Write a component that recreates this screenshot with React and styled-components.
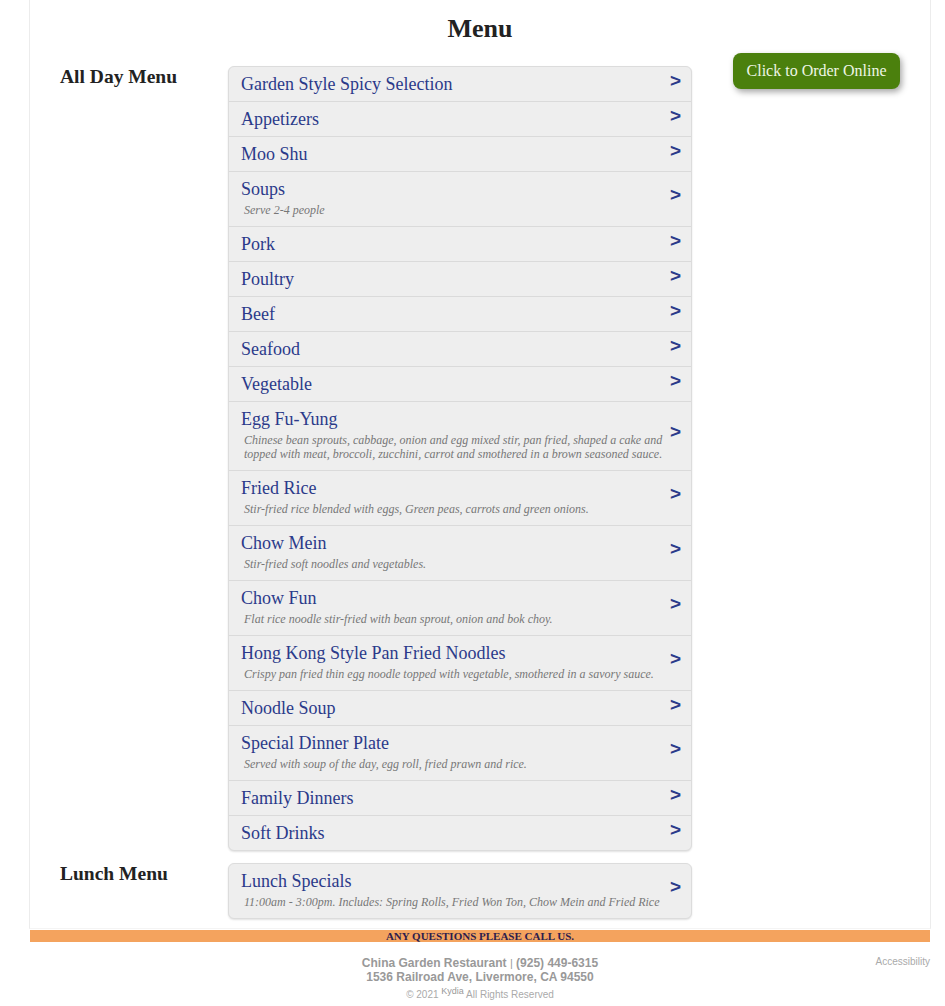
import styled, { createGlobalStyle } from "styled-components";

const GlobalStyle = createGlobalStyle`
  body {
    margin: 0;
    background: #fff;
    font-family: "Liberation Serif", "Times New Roman", serif;
  }
`;

const Page = styled.div`
  width: 902px;
  margin-left: 29px;
`;

const Main = styled.div`
  border-left: 1px solid #ececec;
  border-right: 1px solid #ececec;
  border-bottom: 1px solid #f4f4f4;
  padding: 14px 0 9px;
`;

const Title = styled.h1`
  margin: 0 0 22px;
  font-size: 26px;
  line-height: 30px;
  font-weight: bold;
  text-align: center;
  color: #222;
`;

const Section = styled.div`
  display: flex;
  align-items: flex-start;
  margin-top: ${(p) => (p.$first ? 0 : "12px")};
`;

const Label = styled.h2`
  width: 168px;
  padding-left: 30px;
  margin: 0;
  font-size: 19.5px;
  line-height: 22px;
  font-weight: bold;
  color: #222;
`;

const Panel = styled.div`
  width: 462px;
  background: #eee;
  border: 1px solid #dcdcdc;
  border-radius: 6px;
  box-shadow: 0 1px 2px rgba(0, 0, 0, 0.12);
`;

const Row = styled.div`
  display: flex;
  align-items: center;
  padding: 7px 10px ${(p) => (p.$desc ? "9px" : "6px")} 12px;
  border-top: ${(p) => (p.$first ? "none" : "1px solid #dadada")};
`;

const RowText = styled.div`
  flex: 1;
`;

const RowTitle = styled.div`
  font-size: 18px;
  line-height: 21px;
  color: #2b3a8a;
`;

const RowDesc = styled.div`
  margin: 3px 0 0 3px;
  font-size: 12px;
  line-height: 14px;
  font-style: italic;
  color: #777;
`;

const Arrow = styled.span`
  width: 12px;
  margin-left: 6px;
  font-family: "Liberation Sans", Arial, sans-serif;
  font-weight: bold;
  font-size: 19px;
  line-height: 21px;
  color: #2b3a8a;
  transform: translate(1px, -4px);
`;

const ButtonCol = styled.div`
  flex: 1;
  padding-left: 41px;
  margin-top: -13px;
`;

const OrderButton = styled.button`
  width: 167px;
  height: 36px;
  padding: 0;
  border: none;
  border-radius: 8px;
  background: #4b800d;
  color: #eef6e6;
  font-family: "Liberation Serif", "Times New Roman", serif;
  font-size: 16px;
  box-shadow: 2px 3px 6px rgba(0, 0, 0, 0.35);
  cursor: pointer;
`;

const CallBar = styled.div`
  margin: 1px 1px 0;
  height: 12px;
  background: #f4a35e;
  text-align: center;
  font-family: "Liberation Serif", "Times New Roman", serif;
  font-size: 11px;
  line-height: 12px;
  font-weight: bold;
  color: #2e1d4d;
`;

const Footer = styled.div`
  position: relative;
  padding-top: 14px;
  text-align: center;
  font-family: "Liberation Sans", Arial, sans-serif;
  color: #999;
`;

const FooterLine = styled.div`
  font-size: 12px;
  line-height: 14px;
  font-weight: bold;
`;

const Sep = styled.span`
  font-weight: normal;
  font-size: 11px;
`;

const Copy = styled.div`
  font-size: 10px;
  line-height: 14px;
  color: #aaa;
`;

const Kydia = styled.sup`
  font-size: 9px;
  color: #999;
`;

const Access = styled.a`
  position: absolute;
  right: 1px;
  top: 14px;
  font-size: 10px;
  color: #aaa;
  text-decoration: none;
`;

const allDay = [
  { t: "Garden Style Spicy Selection" },
  { t: "Appetizers" },
  { t: "Moo Shu" },
  { t: "Soups", d: "Serve 2-4 people" },
  { t: "Pork" },
  { t: "Poultry" },
  { t: "Beef" },
  { t: "Seafood" },
  { t: "Vegetable" },
  {
    t: "Egg Fu-Yung",
    d: "Chinese bean sprouts, cabbage, onion and egg mixed stir, pan fried, shaped a cake and topped with meat, broccoli, zucchini, carrot and smothered in a brown seasoned sauce.",
  },
  { t: "Fried Rice", d: "Stir-fried rice blended with eggs, Green peas, carrots and green onions." },
  { t: "Chow Mein", d: "Stir-fried soft noodles and vegetables." },
  { t: "Chow Fun", d: "Flat rice noodle stir-fried with bean sprout, onion and bok choy." },
  {
    t: "Hong Kong Style Pan Fried Noodles",
    d: "Crispy pan fried thin egg noodle topped with vegetable, smothered in a savory sauce.",
  },
  { t: "Noodle Soup" },
  { t: "Special Dinner Plate", d: "Served with soup of the day, egg roll, fried prawn and rice." },
  { t: "Family Dinners" },
  { t: "Soft Drinks" },
];

const lunch = [
  {
    t: "Lunch Specials",
    d: "11:00am - 3:00pm. Includes: Spring Rolls, Fried Won Ton, Chow Mein and Fried Rice",
  },
];

const MenuPanel = ({ items }) => (
  <Panel>
    {items.map((it, i) => (
      <Row key={it.t} $first={i === 0} $desc={!!it.d}>
        <RowText>
          <RowTitle>{it.t}</RowTitle>
          {it.d && <RowDesc>{it.d}</RowDesc>}
        </RowText>
        <Arrow>&gt;</Arrow>
      </Row>
    ))}
  </Panel>
);

export default function App() {
  return (
    <Page>
      <GlobalStyle />
      <Main>
        <Title>Menu</Title>
        <Section $first>
          <Label>All Day Menu</Label>
          <MenuPanel items={allDay} />
          <ButtonCol>
            <OrderButton>Click to Order Online</OrderButton>
          </ButtonCol>
        </Section>
        <Section>
          <Label>Lunch Menu</Label>
          <MenuPanel items={lunch} />
        </Section>
      </Main>
      <CallBar>ANY QUESTIONS PLEASE CALL US.</CallBar>
      <Footer>
        <FooterLine>
          China Garden Restaurant <Sep>|</Sep> (925) 449-6315
        </FooterLine>
        <FooterLine>1536 Railroad Ave, Livermore, CA 94550</FooterLine>
        <Copy>
          © 2021 <Kydia>Kydia</Kydia> All Rights Reserved
        </Copy>
        <Access href="#">Accessibility</Access>
      </Footer>
    </Page>
  );
}
